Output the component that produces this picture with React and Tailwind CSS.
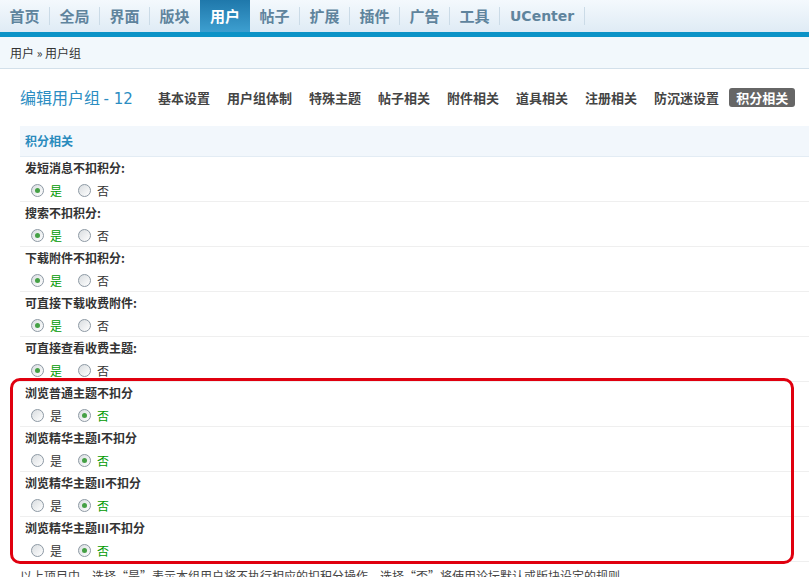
import React from 'react';

const navItems = ['首页', '全局', '界面', '版块', '用户', '帖子', '扩展', '插件', '广告', '工具'];
const subTabs = ['基本设置', '用户组体制', '特殊主题', '帖子相关', '附件相关', '道具相关', '注册相关', '防沉迷设置', '积分相关'];

const rows = [
  { label: '发短消息不扣积分:', yes: true },
  { label: '搜索不扣积分:', yes: true },
  { label: '下载附件不扣积分:', yes: true },
  { label: '可直接下载收费附件:', yes: true },
  { label: '可直接查看收费主题:', yes: true },
  { label: '浏览普通主题不扣分', yes: false },
  { label: '浏览精华主题I不扣分', yes: false },
  { label: '浏览精华主题II不扣分', yes: false },
  { label: '浏览精华主题III不扣分', yes: false },
];

// 单选按钮
const Radio = ({ checked, text }) => (
  <label className="flex items-center">
    <span className="w-[13px] h-[13px] rounded-full border border-[#8d99a4] bg-gradient-to-br from-[#d9dde0] to-white flex items-center justify-center">
      {checked && <span className="w-[5px] h-[5px] rounded-full bg-[#45a045]" />}
    </span>
    <span className={`ml-[6px] ${checked ? 'text-[#009900]' : 'text-[#333]'}`}>{text}</span>
  </label>
);

const App = () => {
  const active = '用户';
  return (
    <div className="relative h-[577px] overflow-hidden bg-white font-['Noto_Sans_CJK_SC',sans-serif] text-[12px] text-[#333]">
      {/* 顶部导航 */}
      <div className="h-[32px] bg-gradient-to-b from-[#f4f9fd] to-[#dfebf5] flex items-stretch">
        {navItems.map((n, i) => {
          const isActive = n === active;
          const nextActive = navItems[i + 1] === active;
          return (
            <React.Fragment key={n}>
              <div
                className={`w-[49px] flex items-center justify-center text-[15px] font-bold ${
                  isActive ? 'bg-gradient-to-b from-[#1f78ab] to-[#3d9fd0] text-white w-[50px]' : 'text-[#5f849d]'
                }`}
              >
                {n}
              </div>
              {!isActive && !nextActive && <div className="w-px h-[18px] self-center bg-[#cbdbe7]" />}
              {nextActive && <div className="w-px" />}
            </React.Fragment>
          );
        })}
        <div className="px-[10px] flex items-center text-[14px] font-bold text-[#5f849d] font-['DejaVu_Sans',sans-serif]">
          UCenter
        </div>
        <div className="w-px h-[18px] self-center bg-[#cbdbe7]" />
      </div>
      <div className="h-[5px] bg-[#0c93c7]" />

      {/* 面包屑 */}
      <div className="h-[32px] bg-[#f2f8fc] border-b border-[#d3e0ea] flex items-center px-[10px] text-[#333]">
        用户 » 用户组
      </div>

      <div className="pl-[20px]">
        {/* 标题与子导航 */}
        <div className="h-[57px] flex items-center">
          <h2 className="w-[130px] text-[16px] text-[#2b8dc2]">
            编辑用户组 <span className="font-['DejaVu_Sans',sans-serif] text-[15px]">- 12</span>
          </h2>
          <div className="flex gap-[1px] text-[13px] font-bold">
            {subTabs.map(t => (
              <span
                key={t}
                className={`h-[19px] flex items-center rounded-[3px] ${
                  t === '积分相关' ? 'px-[7px] ml-[1px] bg-[#666] text-white' : 'px-[8px] text-[#444]'
                }`}
              >
                {t}
              </span>
            ))}
          </div>
        </div>

        {/* 分组标题 */}
        <div className="h-[31px] bg-[#f2f7fc] border-b border-[#e3ecf4] flex items-center pl-[5px] font-bold text-[#2a8bbd]">
          积分相关
        </div>

        {rows.map(r => (
          <div key={r.label} className="border-b border-[#efefef]">
            <div className="h-[21px] flex items-center pl-[5px] font-bold text-[#333]">{r.label}</div>
            <div className="h-[23px] pt-[2px] flex items-center pl-[11px] gap-[16px]">
              <Radio checked={r.yes} text="是" />
              <Radio checked={!r.yes} text="否" />
            </div>
          </div>
        ))}

        <p className="pt-[5px] text-[#444]">
          以上项目中，选择“是”表示本组用户将不执行相应的扣积分操作，选择“否”将使用论坛默认或版块设定的规则
        </p>
      </div>

      {/* 红色标注框 */}
      <div className="absolute left-[10px] top-[378px] w-[784px] h-[186px] border-[3px] border-[#e0000f] rounded-[10px] pointer-events-none" />
    </div>
  );
};

export default App;
